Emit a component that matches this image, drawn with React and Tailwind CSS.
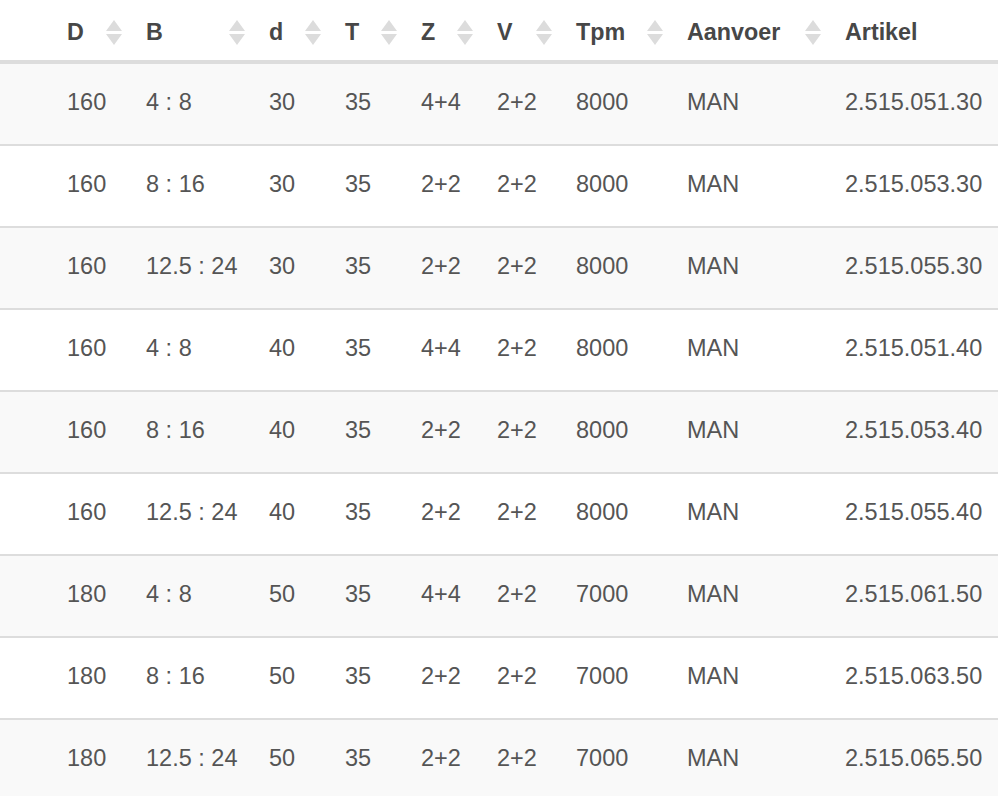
import React from "react";

const rows = [
  ["160", "4 : 8", "30", "35", "4+4", "2+2", "8000", "MAN", "2.515.051.30"],
  ["160", "8 : 16", "30", "35", "2+2", "2+2", "8000", "MAN", "2.515.053.30"],
  ["160", "12.5 : 24", "30", "35", "2+2", "2+2", "8000", "MAN", "2.515.055.30"],
  ["160", "4 : 8", "40", "35", "4+4", "2+2", "8000", "MAN", "2.515.051.40"],
  ["160", "8 : 16", "40", "35", "2+2", "2+2", "8000", "MAN", "2.515.053.40"],
  ["160", "12.5 : 24", "40", "35", "2+2", "2+2", "8000", "MAN", "2.515.055.40"],
  ["180", "4 : 8", "50", "35", "4+4", "2+2", "7000", "MAN", "2.515.061.50"],
  ["180", "8 : 16", "50", "35", "2+2", "2+2", "7000", "MAN", "2.515.063.50"],
  ["180", "12.5 : 24", "50", "35", "2+2", "2+2", "7000", "MAN", "2.515.065.50"],
];

const headers = ["D", "B", "d", "T", "Z", "V", "Tpm", "Aanvoer", "Artikel"];

const grid = "grid grid-cols-[79px_123px_76px_76px_76px_79px_111px_158px_1fr] pl-[67px]";

function SortIcon() {
  return (
    <svg width="18" height="27" viewBox="0 0 18 27" className="shrink-0">
      <path d="M9 1 L17 12 L1 12 Z" fill="#dcdcdc" />
      <path d="M1 15 L17 15 L9 26 Z" fill="#dcdcdc" />
    </svg>
  );
}

export default function App() {
  return (
    <div className="w-[998px] h-[796px] overflow-hidden bg-white font-['Liberation_Sans',Arial,sans-serif]">
      <div className={`${grid} h-[64px] border-b-4 border-[#dddddd] items-center pt-1`}>
        {headers.map((h, i) => (
          <div
            key={h}
            className={`flex items-center justify-between text-[23.3px] font-bold text-[#474747] ${
              i < 8 ? "pr-[23px]" : ""
            }`}
          >
            <span>{h}</span>
            {i < 8 && <SortIcon />}
          </div>
        ))}
      </div>
      {rows.map((r, ri) => (
        <div
          key={ri}
          className={`${grid} h-[82px] border-b-2 border-[#dddddd] items-center pb-[2px] ${
            ri % 2 === 0 ? "bg-[#f9f9f9]" : "bg-white"
          }`}
        >
          {r.map((c, ci) => (
            <div key={ci} className="text-[23.5px] text-[#555555] whitespace-nowrap">
              {c}
            </div>
          ))}
        </div>
      ))}
    </div>
  );
}
